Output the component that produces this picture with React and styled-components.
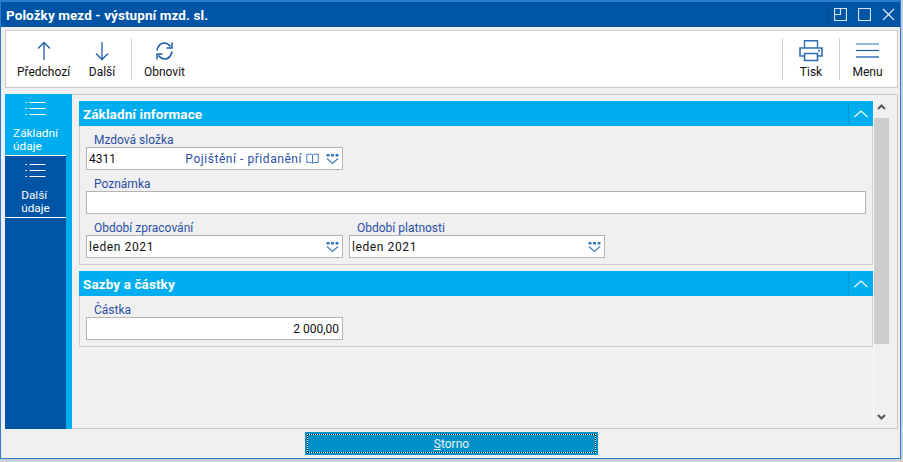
import React from 'react';
import styled, { createGlobalStyle } from 'styled-components';

const GlobalStyle = createGlobalStyle`
  html, body {
    margin: 0;
    padding: 0;
    background: #d0d0d0;
    font-family: Roboto, 'Noto Sans', sans-serif;
  }
`;

const Window = styled.div`
  width: 901px;
  height: 459px;
  box-sizing: border-box;
  background: #f0f0f0;
  border: 1px solid #2b7cd3;
  border-top: 2px solid #2b7cd3;
  display: flex;
  flex-direction: column;
  overflow: hidden;
`;

const TitleBar = styled.div`
  height: 25px;
  flex: none;
  background: #0054a6;
  color: #fff;
  display: flex;
  align-items: center;
  padding: 0 5px 0 5px;
  font-size: 13.5px;
  font-weight: 700;
  letter-spacing: 0.08px;
`;

const TitleText = styled.div`
  flex: 1;
`;

const WinButtons = styled.div`
  display: flex;
  align-items: center;
  gap: 11px;
  padding-left: 5px;
  border-left: 1px solid #0b4a8c;
  height: 22px;
`;

const Body = styled.div`
  flex: 1;
  display: flex;
  flex-direction: column;
  padding: 3px 2px 0 4px;
  min-height: 0;
`;

const Toolbar = styled.div`
  height: 58px;
  flex: none;
  box-sizing: border-box;
  background: #fff;
  border: 1px solid #cccccc;
  display: flex;
  align-items: stretch;
  padding: 7px 2px 7px 8px;
`;

const ToolButton = styled.div`
  width: ${p => p.$w}px;
  display: flex;
  flex-direction: column;
  align-items: center;
  font-size: 12px;
  line-height: 16px;
  color: #111;
`;

const ToolIcon = styled.div`
  height: 28px;
  display: flex;
  align-items: center;
  justify-content: center;
`;

const ToolSep = styled.div`
  width: 1px;
  background: #cfcfcf;
`;

const Spacer = styled.div`
  flex: 1;
`;

const Content = styled.div`
  flex: 1;
  margin-top: 6px;
  display: flex;
  min-height: 0;
`;

const Sidebar = styled.div`
  width: 67px;
  box-sizing: border-box;
  flex: none;
  background: #0054a6;
  border-right: 6px solid #00aeef;
`;

const Tab = styled.div`
  width: 61px;
  height: 62px;
  box-sizing: border-box;
  background: ${p => (p.$active ? '#00aeef' : '#0054a6')};
  border-bottom: 1px solid #fff;
  color: #fff;
  display: flex;
  flex-direction: column;
  align-items: center;
  font-size: 11.8px;
  line-height: 13px;
  padding-top: 7px;
`;

const TabLabel = styled.div`
  margin-top: 10px;
  text-align: left;
`;

const Main = styled.div`
  flex: 1;
  display: flex;
  border: 1px solid #cccccc;
  border-left: none;
  min-width: 0;
`;

const Sections = styled.div`
  flex: 1;
  padding: 6px 0 0 7px;
  border-right: 1px solid #fafafa;
  margin-bottom: 6px;
  min-width: 0;
`;

const Section = styled.div`
  border: 1px solid #cfcfcf;
  border-top: none;
  margin-bottom: 6px;
  padding-bottom: 6px;
`;

const SectionHead = styled.div`
  height: 25px;
  margin: 0 -1px;
  background: #00aeef;
  color: #fff;
  font-size: 13.5px;
  font-weight: 700;
  letter-spacing: 0.1px;
  display: flex;
  align-items: center;
  padding-left: 4px;
`;

const SectionTitle = styled.div`
  flex: 1;
`;

const Collapse = styled.div`
  width: 24px;
  height: 21px;
  border-left: 1px solid #0a93cc;
  display: flex;
  align-items: center;
  justify-content: center;
`;

const Row = styled.div`
  display: flex;
  gap: 6px;
  padding: 0 6px;
`;

const Field = styled.div`
  width: ${p => (p.$w ? `${p.$w}px` : '100%')};
`;

const Label = styled.div`
  height: 21px;
  box-sizing: border-box;
  padding: 7px 0 0 8px;
  font-size: 12px;
  line-height: 14px;
  color: #2a4fa8;
`;

const Input = styled.div`
  height: 23px;
  box-sizing: border-box;
  background: #fff;
  border: 1px solid #b4b4b4;
  display: flex;
  align-items: center;
  padding: 0 3px 0 2px;
  font-size: 12px;
  color: #111;
  justify-content: ${p => (p.$right ? 'flex-end' : 'flex-start')};
`;

const InputValue = styled.div`
  flex: ${p => (p.$right ? 'none' : 1)};
  letter-spacing: ${p => (p.$spaced ? '0.6px' : '0')};
`;

const LinkText = styled.div`
  color: #2a4fa8;
  margin-right: 4px;
  letter-spacing: 0.55px;
`;

const IconGap = styled.span`
  width: 7px;
`;

const Scrollbar = styled.div`
  width: 23px;
  flex: none;
  display: flex;
  flex-direction: column;
  align-items: center;
  padding-right: 8px;
  box-sizing: border-box;
`;

const ScrollArrow = styled.div`
  height: 23px;
  display: flex;
  align-items: center;
`;

const Thumb = styled.div`
  width: 15px;
  height: 226px;
  background: #cdcdcd;
`;

const Footer = styled.div`
  height: 29px;
  flex: none;
  display: flex;
  justify-content: center;
  align-items: center;
`;

const StornoButton = styled.div`
  width: 293px;
  height: 23px;
  box-sizing: border-box;
  background: #0090c8;
  border: 2px solid #0090c8;
  box-shadow: inset 0 0 0 1px #111;
  outline: 1px dotted #fff;
  outline-offset: -3px;
  color: #e8f4fa;
  font-size: 12px;
  display: flex;
  align-items: center;
  justify-content: center;
`;

const Hotkey = styled.span`
  text-decoration: underline;
`;

const Glyph = ({ w = 24, h = 24, children }) => (
  <svg width={w} height={h} viewBox={`0 0 ${w} ${h}`} fill="none" style={{ display: 'block' }}>
    {children}
  </svg>
);

const ArrowUp = () => (
  <Glyph w={16} h={20}>
    <path d="M8 1.5V19M2 7.5L8 1.5L14 7.5" stroke="#1f5fa8" strokeWidth="1.3" />
  </Glyph>
);

const ArrowDown = () => (
  <Glyph w={16} h={20}>
    <path d="M8 1V18.5M2 12.5L8 18.5L14 12.5" stroke="#1f5fa8" strokeWidth="1.3" />
  </Glyph>
);

const Refresh = () => (
  <Glyph w={17} h={20}>
    <path d="M1 9.5C2 4.5 5 2 8.5 2C11 2 13 3.5 14.5 5.5" stroke="#1f5fa8" strokeWidth="1.6" />
    <path d="M16 1.5V7H10.5" stroke="#1f5fa8" strokeWidth="1.5" />
    <path d="M16 10.5C15 15.5 12 18 8.5 18C6 18 4 16.5 2.5 14.5" stroke="#1f5fa8" strokeWidth="1.6" />
    <path d="M1 18.5V13H6.5" stroke="#1f5fa8" strokeWidth="1.5" />
  </Glyph>
);

const Printer = () => (
  <Glyph w={24} h={22}>
    <path d="M5.5 8V.8H18.5V8" stroke="#2f6db5" strokeWidth="1.4" />
    <path d="M5.5 16H1V8H23V16H18.5" stroke="#2f6db5" strokeWidth="1.6" />
    <path d="M5.5 13.5H18.5V20.5H5.5Z" stroke="#2f6db5" strokeWidth="1.6" />
    <rect x="19" y="10" width="2" height="1.5" fill="#2f6db5" />
  </Glyph>
);

const MenuIcon = () => (
  <Glyph w={24} h={18}>
    <path d="M0 2H23" stroke="#4f86c2" strokeWidth="1.2" />
    <path d="M0 8.5H23" stroke="#1f5fa8" strokeWidth="1.2" />
    <path d="M0 15H23" stroke="#3f7cc0" strokeWidth="1.6" />
  </Glyph>
);

const ListIcon = () => (
  <Glyph w={21} h={16}>
    <g stroke="#fff" strokeWidth="1">
      <path d="M4.5 1.5H20.5M4.5 7.5H20.5M4.5 13.5H20.5" />
      <path d="M.5 1.5H2M.5 7.5H2M.5 13.5H2" />
    </g>
  </Glyph>
);

const Restore = () => (
  <Glyph w={13} h={13}>
    <path d="M.5 .5H12.5V12.5H.5Z" stroke="#d8e6f4" strokeWidth="1.2" />
    <path d="M6.5 .5V6.5H.5" stroke="#d8e6f4" strokeWidth="1.2" />
  </Glyph>
);

const Maximize = () => (
  <Glyph w={13} h={13}>
    <path d="M.5 .5H12.5V12.5H.5Z" stroke="#d8e6f4" strokeWidth="1.2" />
  </Glyph>
);

const CloseX = () => (
  <Glyph w={13} h={13}>
    <path d="M1 1L12 12M12 1L1 12" stroke="#e6eff8" strokeWidth="1.1" />
  </Glyph>
);

const ChevronUp = () => (
  <Glyph w={14} h={8}>
    <path d="M.5 7L7 1L13.5 7" stroke="#fff" strokeWidth="1.1" />
  </Glyph>
);

const Book = () => (
  <Glyph w={13} h={11}>
    <path d="M6.5 2C5 1 3 1 .8 1.2V9.5C3 9.3 5 9.3 6.5 10.2C8 9.3 10 9.3 12.2 9.5V1.2C10 1 8 1 6.5 2ZM6.5 2V10" stroke="#3a78bd" strokeWidth="1" />
  </Glyph>
);

const Picker = () => (
  <Glyph w={13} h={10}>
    <path d="M.5 0H3.5V2.5H.5ZM5 0H8V2.5H5ZM9.5 0H12.5V2.5H9.5Z" fill="#3a78bd" />
    <path d="M1 4.5L6.5 9.5L12 4.5" stroke="#3a78bd" strokeWidth="1.1" />
  </Glyph>
);

const ScrollUp = () => (
  <Glyph w={9} h={6}>
    <path d="M1 5L4.5 1.5L8 5" stroke="#555" strokeWidth="2" />
  </Glyph>
);

const ScrollDown = () => (
  <Glyph w={9} h={6}>
    <path d="M1 1L4.5 4.5L8 1" stroke="#555" strokeWidth="2" />
  </Glyph>
);

const App = () => {
  return (
    <>
      <GlobalStyle />
      <Window>
        <TitleBar>
          <TitleText>Položky mezd - výstupní mzd. sl.</TitleText>
          <WinButtons>
            <Restore />
            <Maximize />
            <CloseX />
          </WinButtons>
        </TitleBar>
        <Body>
          <Toolbar>
            <ToolButton $w={59}>
              <ToolIcon><ArrowUp /></ToolIcon>
              Předchozí
            </ToolButton>
            <ToolButton $w={58}>
              <ToolIcon><ArrowDown /></ToolIcon>
              Další
            </ToolButton>
            <ToolSep />
            <ToolButton $w={65}>
              <ToolIcon><Refresh /></ToolIcon>
              Obnovit
            </ToolButton>
            <Spacer />
            <ToolSep />
            <ToolButton $w={56}>
              <ToolIcon><Printer /></ToolIcon>
              Tisk
            </ToolButton>
            <ToolSep />
            <ToolButton $w={55}>
              <ToolIcon><MenuIcon /></ToolIcon>
              Menu
            </ToolButton>
          </Toolbar>
          <Content>
            <Sidebar>
              <Tab $active>
                <ListIcon />
                <TabLabel>Základní<br />údaje</TabLabel>
              </Tab>
              <Tab>
                <ListIcon />
                <TabLabel>Další<br />údaje</TabLabel>
              </Tab>
            </Sidebar>
            <Main>
              <Sections>
                <Section>
                  <SectionHead>
                    <SectionTitle>Základní informace</SectionTitle>
                    <Collapse><ChevronUp /></Collapse>
                  </SectionHead>
                  <Row>
                    <Field $w={257}>
                      <Label>Mzdová složka</Label>
                      <Input>
                        <InputValue>4311</InputValue>
                        <LinkText>Pojištění - přidanění</LinkText>
                        <Book />
                        <IconGap />
                        <Picker />
                      </Input>
                    </Field>
                  </Row>
                  <Row>
                    <Field>
                      <Label>Poznámka</Label>
                      <Input />
                    </Field>
                  </Row>
                  <Row>
                    <Field $w={257}>
                      <Label>Období zpracování</Label>
                      <Input>
                        <InputValue $spaced>leden 2021</InputValue>
                        <Picker />
                      </Input>
                    </Field>
                    <Field $w={256}>
                      <Label>Období platnosti</Label>
                      <Input>
                        <InputValue $spaced>leden 2021</InputValue>
                        <Picker />
                      </Input>
                    </Field>
                  </Row>
                </Section>
                <Section>
                  <SectionHead>
                    <SectionTitle>Sazby a částky</SectionTitle>
                    <Collapse><ChevronUp /></Collapse>
                  </SectionHead>
                  <Row>
                    <Field $w={257}>
                      <Label>Částka</Label>
                      <Input $right>
                        <InputValue $right>2 000,00</InputValue>
                      </Input>
                    </Field>
                  </Row>
                </Section>
              </Sections>
              <Scrollbar>
                <ScrollArrow><ScrollUp /></ScrollArrow>
                <Thumb />
                <Spacer />
                <ScrollArrow><ScrollDown /></ScrollArrow>
              </Scrollbar>
            </Main>
          </Content>
          <Footer>
            <StornoButton><span><Hotkey>S</Hotkey>torno</span></StornoButton>
          </Footer>
        </Body>
      </Window>
    </>
  );
};

export default App;
